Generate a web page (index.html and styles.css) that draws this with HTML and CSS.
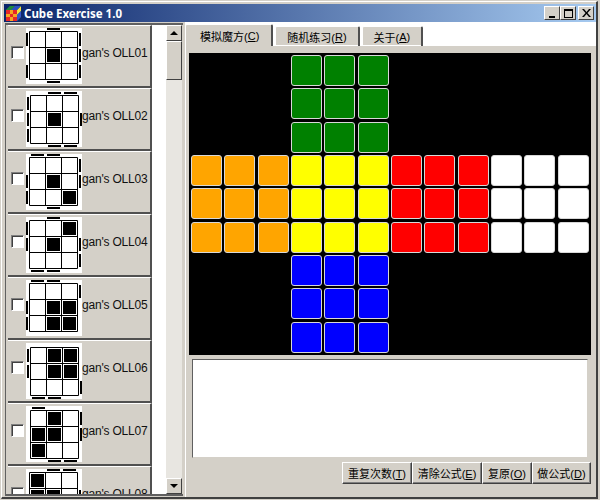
FILE: index.html
```html
<!doctype html>
<html lang="zh">
  <head>
    <meta charset="UTF-8" />
    <title>Cube Exercise 1.0</title>
    <link rel="stylesheet" href="styles.css">
  </head>
  <body>
    <!-- shared shapes for the OLL thumbnails -->
    <svg class="defs" aria-hidden="true">
      <defs>
        <path id="f" d="M3.5 3.5h48v48h-48zM19.5 3.5v48M35.5 3.5v48M3.5 19.5h48M3.5 35.5h48" fill="none" stroke="#000"/>
        <rect id="s" width="13" height="13"/>
        <rect id="h" width="13" height="2"/>
        <rect id="v" width="2" height="13"/>
      </defs>
    </svg>

    <div class="window">
      <div class="frame">
        <div class="titlebar">
          <svg class="app-icon" width="17" height="17" viewBox="0 0 17 17">
            <path d="M1 5l4-4h11v11l-4 4z" fill="#2a7a2a"/>
            <path d="M12 5l4-4v5l-4 4z" fill="#f4e23a"/>
            <path d="M12 10l4-4v6l-4 4z" fill="#3a55c8"/>
            <path d="M5 1h5l-4 4H1z" fill="#1e8a3a"/>
            <path d="M10 1h6l-4 4H6z" fill="#2b4fc0"/>
            <rect x="1" y="5" width="11" height="11" fill="#f5a623"/>
            <path d="M1 5h4v4H1zM8 5h4v4H8zM5 9h3v3H5zM1 12h4v4H1zM8 12h4v4H8z" fill="#e8262a"/>
          </svg>
          <span class="title">Cube Exercise 1.0</span>
          <div class="controls">
            <span class="ctl"><svg width="9" height="9" viewBox="0 0 9 9"><rect x="1" y="7" width="6" height="2"/></svg></span>
            <span class="ctl"><svg width="9" height="9" viewBox="0 0 9 9"><path d="M0 0h9v9H0zM1 2v6h7V2z" fill-rule="evenodd"/></svg></span>
            <span class="ctl ctl-close"><svg width="9" height="8" viewBox="0 0 9 8"><path d="M0 0h2l2.500 3L7 0h2L5.500 4 9 8H7L4.500 5 2 8H0l3.500-4z"/></svg></span>
          </div>
        </div>

        <div class="content">
          <div class="list-panel">
            <div class="oll-list">
              <div class="oll-item">
                <input class="oll-check" type="checkbox">
                <svg class="thumb" viewBox="0 0 56 56"><use href="#f"/><use href="#s" x="21" y="21"/><use href="#h" x="21" y="0"/><use href="#h" x="21" y="53"/><use href="#v" x="0" y="5"/><use href="#v" x="0" y="37"/><use href="#v" x="53" y="5"/><use href="#v" x="53" y="21"/><use href="#v" x="53" y="37"/></svg>
                <span class="oll-name">gan's OLL01</span>
              </div>
              <div class="oll-item">
                <input class="oll-check" type="checkbox">
                <svg class="thumb" viewBox="0 0 56 56"><g transform="translate(1 1)"><use href="#f"/><use href="#s" x="21" y="21"/><use href="#h" x="21" y="0"/><use href="#h" x="37" y="0"/><use href="#h" x="21" y="53"/><use href="#h" x="37" y="53"/><use href="#v" x="0" y="5"/><use href="#v" x="0" y="21"/><use href="#v" x="0" y="37"/><use href="#v" x="53" y="21"/></g></svg>
                <span class="oll-name">gan's OLL02</span>
              </div>
              <div class="oll-item">
                <input class="oll-check" type="checkbox">
                <svg class="thumb" viewBox="0 0 56 56"><use href="#f"/><use href="#s" x="21" y="21"/><use href="#s" x="37" y="37"/><use href="#h" x="5" y="0"/><use href="#h" x="21" y="0"/><use href="#h" x="21" y="53"/><use href="#v" x="0" y="21"/><use href="#v" x="0" y="37"/><use href="#v" x="53" y="5"/><use href="#v" x="53" y="21"/></svg>
                <span class="oll-name">gan's OLL03</span>
              </div>
              <div class="oll-item">
                <input class="oll-check" type="checkbox">
                <svg class="thumb" viewBox="0 0 56 56"><use href="#f"/><use href="#s" x="21" y="21"/><use href="#s" x="37" y="5"/><use href="#h" x="21" y="0"/><use href="#h" x="5" y="53"/><use href="#h" x="21" y="53"/><use href="#v" x="0" y="5"/><use href="#v" x="0" y="21"/><use href="#v" x="53" y="21"/><use href="#v" x="53" y="37"/></svg>
                <span class="oll-name">gan's OLL04</span>
              </div>
              <div class="oll-item">
                <input class="oll-check" type="checkbox">
                <svg class="thumb" viewBox="0 0 56 56"><use href="#f"/><use href="#s" x="21" y="21"/><use href="#s" x="37" y="21"/><use href="#s" x="21" y="37"/><use href="#s" x="37" y="37"/><use href="#h" x="5" y="0"/><use href="#h" x="21" y="0"/><use href="#v" x="0" y="21"/><use href="#v" x="0" y="37"/><use href="#v" x="53" y="5"/></svg>
                <span class="oll-name">gan's OLL05</span>
              </div>
              <div class="oll-item">
                <input class="oll-check" type="checkbox">
                <svg class="thumb" viewBox="0 0 56 56"><g transform="translate(1 1)"><use href="#f"/><use href="#s" x="21" y="5"/><use href="#s" x="37" y="5"/><use href="#s" x="21" y="21"/><use href="#s" x="37" y="21"/><use href="#h" x="5" y="53"/><use href="#h" x="21" y="53"/><use href="#v" x="0" y="5"/><use href="#v" x="0" y="21"/><use href="#v" x="53" y="37"/></g></svg>
                <span class="oll-name">gan's OLL06</span>
              </div>
              <div class="oll-item">
                <input class="oll-check" type="checkbox">
                <svg class="thumb" viewBox="0 0 56 56"><g transform="translate(1 1)"><use href="#f"/><use href="#s" x="21" y="5"/><use href="#s" x="5" y="21"/><use href="#s" x="21" y="21"/><use href="#s" x="5" y="37"/><use href="#h" x="5" y="0"/><use href="#h" x="21" y="53"/><use href="#h" x="37" y="53"/><use href="#v" x="53" y="5"/><use href="#v" x="53" y="21"/></g></svg>
                <span class="oll-name">gan's OLL07</span>
              </div>
              <div class="oll-item">
                <input class="oll-check" type="checkbox">
                <svg class="thumb" viewBox="0 0 56 56"><use href="#f"/><use href="#s" x="5" y="5"/><use href="#s" x="5" y="21"/><use href="#s" x="21" y="21"/><use href="#h" x="21" y="0"/><use href="#h" x="37" y="0"/><use href="#v" x="53" y="21"/></svg>
                <span class="oll-name">gan's OLL08</span>
              </div>
            </div>
            <div class="scrollbar">
              <span class="sb-btn"><i class="arrow-up"></i></span>
              <span class="sb-thumb"></span>
              <span class="sb-track"></span>
              <span class="sb-btn"><i class="arrow-down"></i></span>
            </div>
          </div>

          <div class="main-panel">
            <div class="tabs">
              <span class="tab active">模拟魔方(<u>C</u>)</span>
              <span class="tab">随机练习(<u>R</u>)</span>
              <span class="tab">关于(<u>A</u>)</span>
            </div>
            <div class="tab-page">
              <div class="board">
                <span class="blank"></span><b class="g"></b><b class="g"></b><b class="g"></b><span class="blank wide"></span>
                <span class="blank"></span><b class="g"></b><b class="g"></b><b class="g"></b><span class="blank wide"></span>
                <span class="blank"></span><b class="g"></b><b class="g"></b><b class="g"></b><span class="blank wide"></span>
                <b class="o"></b><b class="o"></b><b class="o"></b><b class="y"></b><b class="y"></b><b class="y"></b><b class="r"></b><b class="r"></b><b class="r"></b><b class="w"></b><b class="w"></b><b class="w"></b>
                <b class="o"></b><b class="o"></b><b class="o"></b><b class="y"></b><b class="y"></b><b class="y"></b><b class="r"></b><b class="r"></b><b class="r"></b><b class="w"></b><b class="w"></b><b class="w"></b>
                <b class="o"></b><b class="o"></b><b class="o"></b><b class="y"></b><b class="y"></b><b class="y"></b><b class="r"></b><b class="r"></b><b class="r"></b><b class="w"></b><b class="w"></b><b class="w"></b>
                <span class="blank"></span><b class="b"></b><b class="b"></b><b class="b"></b><span class="blank wide"></span>
                <span class="blank"></span><b class="b"></b><b class="b"></b><b class="b"></b><span class="blank wide"></span>
                <span class="blank"></span><b class="b"></b><b class="b"></b><b class="b"></b><span class="blank wide"></span>
              </div>
              <div class="formula"></div>
              <div class="actions">
                <button class="btn btn-lg">重复次数(<u>T</u>)</button>
                <button class="btn btn-lg">清除公式(<u>E</u>)</button>
                <button class="btn btn-sm">复原(<u>O</u>)</button>
                <button class="btn btn-md">做公式(<u>D</u>)</button>
              </div>
            </div>
          </div>
        </div>
      </div>
    </div>
  </body>
</html>
```

FILE: styles.css
```css
* {
  box-sizing: border-box;
}

html, body {
  margin: 0;
  padding: 0;
  background-color: #d4d0c8;
}

.defs {
  position: absolute;
  width: 0;
  height: 0;
}

.window {
  width: 600px;
  height: 500px;
  padding: 1px 2px 1px 1px;
  font-family: "Liberation Sans", "Noto Sans CJK SC", sans-serif;
  font-size: 12px;
  color: #000;
  background-color: #d4d0c8;
  overflow: hidden;
}

.frame {
  display: flex;
  flex-direction: column;
  height: 100%;
  padding: 2px 0 0 3px;
  border-style: solid;
  border-width: 1px 2px 2px 1px;
  border-color: #fff #404040 #404040 #fff;
}

/* Title bar */
.titlebar {
  display: flex;
  align-items: center;
  flex: none;
  height: 18px;
  margin-left: -1px;
  padding: 0 2px 0 1px;
  background: linear-gradient(to right, #0a246a, #a6caf0);
}

.app-icon {
  flex: none;
  margin-right: 2px;
}

.title {
  font-family: "Noto Sans", sans-serif;
  font-size: 11.5px;
  font-weight: bold;
  color: #fff;
  white-space: nowrap;
}

.controls {
  display: flex;
  margin-left: auto;
}

.ctl {
  display: flex;
  align-items: center;
  justify-content: center;
  width: 16px;
  height: 14px;
  background-color: #d4d0c8;
  border: 1px solid;
  border-color: #fff #404040 #404040 #fff;
}

.ctl-close {
  margin-left: 2px;
}

/* Left list */
.content {
  display: flex;
  flex: 1;
  min-height: 0;
  margin-top: 1px;
}

.list-panel {
  display: flex;
  flex: none;
  width: 178px;
  height: 473px;
  border-style: solid;
  border-width: 2px 0 2px 1px;
  border-color: #606060 #fff #606060 #606060;
}

.oll-list {
  flex: none;
  width: 160px;
  padding-left: 2px;
  overflow: hidden;
  background-color: #fff;
  box-shadow: inset 2px 0 0 #d4d0c8;
}

.oll-item {
  display: flex;
  align-items: flex-start;
  width: 144px;
  height: 63px;
  padding-top: 2px;
  padding-left: 3px;
  background-color: #d4d0c8;
  border-top: 1px solid #fff;
  border-right: 2px solid #505050;
  border-bottom: 2px solid #505050;
}

.oll-check {
  appearance: none;
  flex: none;
  width: 13px;
  height: 13px;
  margin: 18px 2px 0 0;
  background-color: #fff;
  border: 1px solid;
  border-color: #808080 #fff #fff #808080;
  box-shadow: inset 1px 1px 0 #404040;
}

.thumb {
  display: block;
  flex: none;
  width: 56px;
  height: 56px;
  background-color: #fff;
}

.oll-name {
  margin-top: 18px;
  letter-spacing: -0.2px;
  white-space: nowrap;
  color: #111;
}

/* Scrollbar */
.scrollbar {
  display: flex;
  flex-direction: column;
  flex: none;
  width: 16px;
  background-color: #e8e6e1;
}

.sb-btn {
  display: flex;
  align-items: center;
  justify-content: center;
  flex: none;
  height: 16px;
  background-color: #d4d0c8;
  border: 1px solid;
  border-color: #fff #404040 #404040 #fff;
}

.sb-thumb {
  flex: none;
  height: 39px;
  background-color: #d4d0c8;
  border: 1px solid;
  border-color: #fff #404040 #404040 #fff;
}

.sb-track {
  flex: 1;
}

.arrow-up,
.arrow-down {
  width: 0;
  height: 0;
  border-left: 4px solid transparent;
  border-right: 4px solid transparent;
}

.arrow-up {
  border-bottom: 4px solid #000;
}

.arrow-down {
  border-top: 4px solid #000;
}

/* Right side */
.main-panel {
  display: flex;
  flex-direction: column;
  flex: 1;
  min-width: 0;
  margin-top: -1px;
  margin-left: 2px;
  font-size: 11px;
}

.tabs {
  display: flex;
  align-items: flex-end;
  flex: none;
  height: 24px;
  background-color: #fff;
}

.tab {
  display: flex;
  align-items: center;
  justify-content: center;
  height: 20px;
  padding: 0 11px;
  white-space: nowrap;
  background-color: #d4d0c8;
  border-top: 1px solid #fff;
  border-left: 1px solid #fff;
  border-right: 2px solid #505050;
  border-radius: 2px 2px 0 0;
  box-shadow: inset 0 -1px 0 #fff;
}

.tab + .tab {
  margin-left: 2px;
}

.tab.active {
  height: 22px;
  padding: 0 12px 0 14px;
  box-shadow: none;
}

.tab-page {
  display: flex;
  flex-direction: column;
  flex: 1;
  min-height: 0;
  padding: 7px 0 0 3px;
  background-color: #d4d0c8;
  border-left: 1px solid #fff;
}

.board {
  display: grid;
  flex: none;
  grid-template-columns: repeat(12, 1fr);
  grid-template-rows: repeat(9, 1fr);
  width: 402px;
  height: 302px;
  padding: 2px 0 0 2px;
  background-color: #000;
}

.blank {
  grid-column: span 3;
}

.blank.wide {
  grid-column: span 6;
}

.board b {
  display: block;
  width: 31px;
  height: 31px;
  border: 1px solid #d8d8d8;
  border-radius: 3px;
}

.board .g { background-color: #008000; }
.board .o { background-color: #ffa500; }
.board .y { background-color: #ffff00; }
.board .r { background-color: #ff0000; }
.board .w { background-color: #fff; }
.board .b { background-color: #0000ff; }

.formula {
  flex: none;
  width: 396px;
  height: 99px;
  margin: 4px 0 0 3px;
  background-color: #fff;
  border: 1px solid;
  border-color: #606060 #d4d0c8 #d4d0c8 #606060;
}

.actions {
  display: flex;
  justify-content: flex-end;
  width: 402px;
  margin-top: 4px;
}

.btn {
  height: 22px;
  padding: 0;
  font: inherit;
  color: #000;
  white-space: nowrap;
  background-color: #d4d0c8;
  border: 1px solid;
  border-color: #fff #404040 #404040 #fff;
  box-shadow: inset -1px -1px 0 #808080;
}

.btn-lg {
  width: 70px;
}

.btn-md {
  width: 59px;
}

.btn-sm {
  width: 50px;
}
```
